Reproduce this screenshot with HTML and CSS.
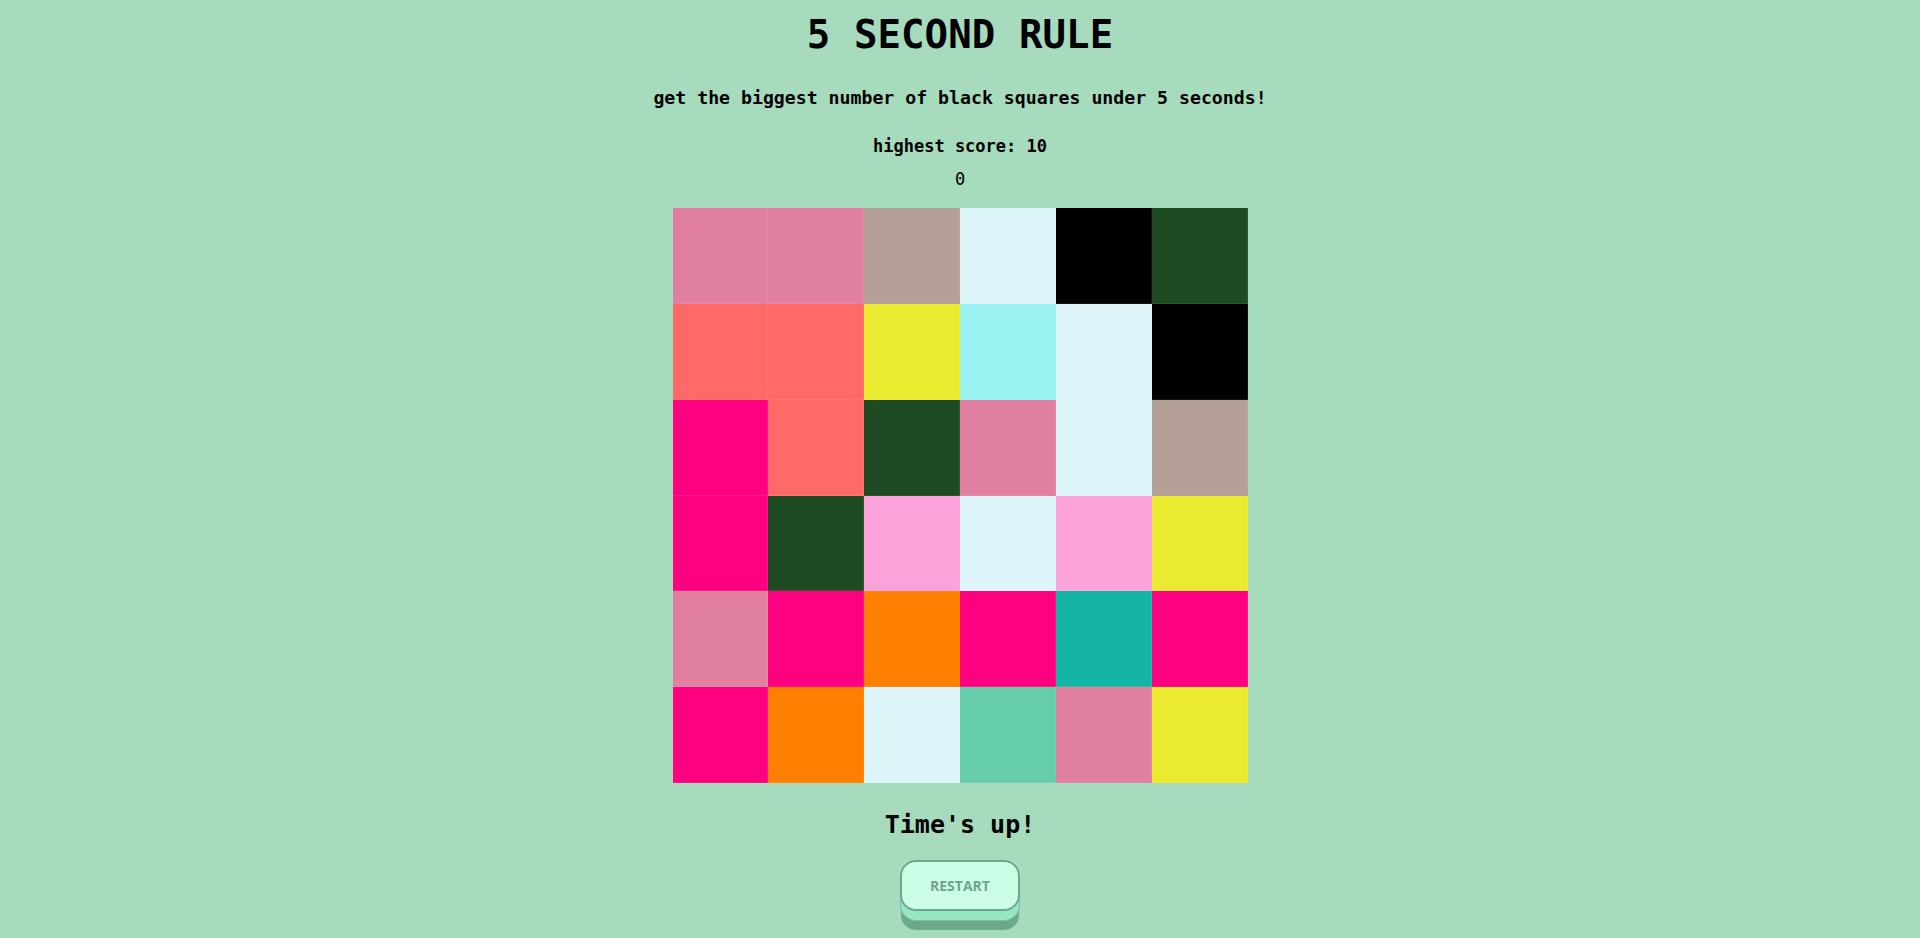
FILE: index.html
```html
<!DOCTYPE html>
<html lang="en">
<head>
<meta charset="utf-8">
<title>5 Second Rule</title>
<link rel="stylesheet" href="styles.css">
</head>
<body>
<main class="game">
  <h1 class="title">5 SECOND RULE</h1>
  <p class="subtitle">get the biggest number of black squares under 5 seconds!</p>
  <p class="best">highest score: 10</p>
  <p class="score">0</p>
  <div class="board">
    <div class="cell c-pink"></div><div class="cell c-pink"></div><div class="cell c-grey"></div><div class="cell c-ice"></div><div class="cell c-black"></div><div class="cell c-forest"></div>
    <div class="cell c-salmon"></div><div class="cell c-salmon"></div><div class="cell c-yellow"></div><div class="cell c-aqua"></div><div class="cell c-ice"></div><div class="cell c-black"></div>
    <div class="cell c-hot"></div><div class="cell c-salmon"></div><div class="cell c-forest"></div><div class="cell c-pink"></div><div class="cell c-ice"></div><div class="cell c-grey"></div>
    <div class="cell c-hot"></div><div class="cell c-forest"></div><div class="cell c-blush"></div><div class="cell c-ice"></div><div class="cell c-blush"></div><div class="cell c-yellow"></div>
    <div class="cell c-pink"></div><div class="cell c-hot"></div><div class="cell c-orange"></div><div class="cell c-hot"></div><div class="cell c-teal"></div><div class="cell c-hot"></div>
    <div class="cell c-hot"></div><div class="cell c-orange"></div><div class="cell c-ice"></div><div class="cell c-mint"></div><div class="cell c-pink"></div><div class="cell c-yellow"></div>
  </div>
  <p class="status">Time's up!</p>
  <button class="restart" type="button">RESTART</button>
</main>
</body>
</html>
```
FILE: styles.css
```css
html, body {
  margin: 0;
  padding: 0;
  background: #a6dbbe;
}

body {
  font-family: "DejaVu Sans Mono", "Liberation Mono", monospace;
  color: #000;
  height: 938px;
  overflow: hidden;
}

.game {
  display: flex;
  flex-direction: column;
  align-items: center;
  text-align: center;
}

.title {
  margin: 11px 0 0;
  font-size: 39px;
  line-height: 48px;
  font-weight: bold;
  letter-spacing: 0.1px;
}

.subtitle {
  margin: 27px 0 0;
  font-size: 18.2px;
  line-height: 24px;
  font-weight: bold;
}

.best {
  margin: 24px 0 0;
  font-size: 17px;
  line-height: 24px;
  font-weight: bold;
}

.score {
  margin: 9px 0 0;
  font-size: 17px;
  line-height: 24px;
  font-weight: normal;
}

.board {
  margin-top: 17px;
  width: 575px;
  height: 575px;
  display: grid;
  grid-template-columns: repeat(6, 1fr);
  grid-template-rows: repeat(6, 1fr);
}

.cell {
  box-shadow: inset -1px -1px 0 rgba(255, 255, 255, 0.08);
}

.c-pink   { background: #e07f9f; }
.c-grey   { background: #b4a097; }
.c-ice    { background: #def5f9; }
.c-black  { background: #000000; }
.c-forest { background: #1e4a24; }
.c-salmon { background: #ff6a68; }
.c-yellow { background: #eaea30; }
.c-aqua   { background: #9af3f2; }
.c-hot    { background: #ff0080; }
.c-blush  { background: #fca2da; }
.c-orange { background: #ff7f00; }
.c-teal   { background: #14b5a5; }
.c-mint   { background: #66cdaa; }

.status {
  margin: 26px 0 0;
  font-size: 25px;
  line-height: 32px;
  font-weight: bold;
}

.restart {
  margin-top: 19px;
  width: 120px;
  height: 51px;
  box-sizing: border-box;
  border: 2px solid #6ea88c;
  border-radius: 16px;
  background: #ccfde6;
  color: #6da68a;
  font-family: "Open Sans", "Noto Sans", sans-serif;
  font-weight: bold;
  font-size: 14px;
  letter-spacing: 0;
  padding: 0;
  box-shadow: 0 10px 0 -1px #98e5c2, 0 10px 0 0 #7fbf9f, 0 20px 1px -1px #6ca88b;
  cursor: pointer;
}
```
